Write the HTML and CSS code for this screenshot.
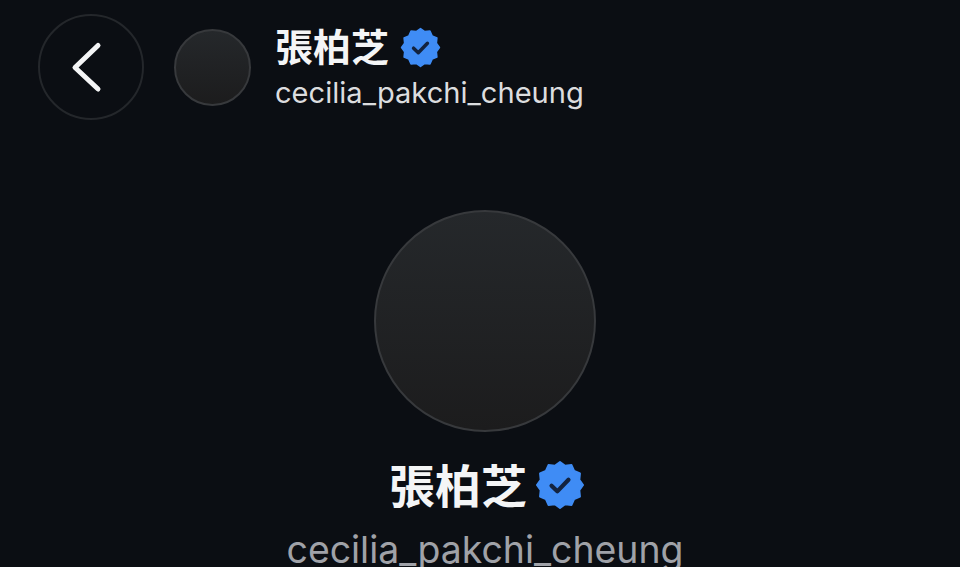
FILE: index.html
```html
<!DOCTYPE html>
<html lang="zh-Hant">
<head>
    <meta charset="UTF-8">
    <meta name="viewport" content="width=device-width, initial-scale=1.0">
    <title>張柏芝</title>
    <link rel="stylesheet" href="styles.css">
</head>
<body>
    <svg class="defs" width="0" height="0">
        <symbol id="badge" viewBox="-1 -1 26 26">
            <polygon class="badge-fill" points="12,0 14.69,1.95 18,1.61 19.35,4.65 22.39,6 22.05,9.31 24,12 22.05,14.69 22.39,18 19.35,19.35 18,22.39 14.69,22.05 12,24 9.31,22.05 6,22.39 4.65,19.35 1.61,18 1.95,14.69 0,12 1.95,9.31 1.61,6 4.65,4.65 6,1.61 9.31,1.95"/>
            <path class="badge-check" d="M7.6 12.4l3 2.9 5.8-6"/>
        </symbol>
    </svg>

    <header class="topbar">
        <button class="back-btn" type="button" aria-label="Back">
            <svg class="back-icon" viewBox="0 0 32 54"><path d="M28 5.5L5 27.5 28 49"/></svg>
        </button>
        <div class="avatar avatar-small"></div>
        <div class="topbar-text">
            <div class="name-row">
                <span class="name-small">張柏芝</span>
                <svg class="badge-small"><use href="#badge"/></svg>
            </div>
            <div class="handle-small">cecilia_pakchi_cheung</div>
        </div>
    </header>

    <main class="profile">
        <div class="avatar avatar-large"></div>
        <div class="name-row name-row-large">
            <span class="name-large">張柏芝</span>
            <svg class="badge-large"><use href="#badge"/></svg>
        </div>
        <div class="handle-large">cecilia_pakchi_cheung</div>
    </main>
</body>
</html>
```

FILE: styles.css
```css
html, body {
    height: 100%;
}

body {
    margin: 0;
    overflow: hidden;
    background-color: #0b0e13;
    color: #f4f5f6;
    font-family: Inter, "Noto Sans CJK TC", sans-serif;
}

.defs {
    display: block;
    height: 0;
}

.badge-fill {
    fill: #3f8cf5;
    stroke: #3f8cf5;
    stroke-width: 1;
    stroke-linejoin: round;
}

.badge-check {
    fill: none;
    stroke: #13233f;
    stroke-width: 2.2;
    stroke-linecap: round;
    stroke-linejoin: round;
}

.topbar {
    display: flex;
    align-items: center;
    height: 106px;
    padding: 14px 0 0 38px;
}

.back-btn {
    display: flex;
    align-items: center;
    justify-content: center;
    box-sizing: border-box;
    flex: none;
    width: 106px;
    height: 106px;
    padding: 0 10px 0 0;
    border: 2px solid #24272b;
    border-radius: 50%;
    background: none;
}

.back-icon {
    width: 32px;
    height: 54px;
}

.back-icon path {
    fill: none;
    stroke: #f4f5f6;
    stroke-width: 5;
    stroke-linecap: round;
    stroke-linejoin: round;
}

.avatar {
    box-sizing: border-box;
    flex: none;
    border: 2px solid #37393c;
    border-radius: 50%;
    background: linear-gradient(#25282b, #1c1c1d);
}

.avatar-small {
    width: 77px;
    height: 77px;
    margin: 0 0 0 30px;
}

.topbar-text {
    align-self: flex-start;
    margin: 5px 0 0 26px;
}

.name-row {
    display: flex;
    align-items: center;
}

.name-small {
    font-family: "Noto Sans CJK TC", sans-serif;
    font-size: 38px;
    font-weight: 700;
    line-height: 52px;
    margin-left: -2px;
}

.badge-small {
    width: 41px;
    height: 41px;
    margin: 4px 0 0 11px;
}

.handle-small {
    margin: 7px 0 0 -2px;
    color: #dcdddf;
    font-size: 29.1px;
    line-height: 30px;
    white-space: nowrap;
}

.profile {
    display: flex;
    flex-direction: column;
    align-items: center;
    padding: 90px 0 0 10px;
}

.avatar-large {
    width: 222px;
    height: 222px;
}

.name-row-large {
    margin: 19px 0 0 4px;
}

.name-large {
    font-family: "Noto Sans CJK TC", sans-serif;
    font-size: 46px;
    font-weight: 700;
    line-height: 64px;
}

.badge-large {
    width: 50px;
    height: 50px;
    margin: 4px 0 0 8px;
}

.handle-large {
    margin-top: 14px;
    color: #a0a2a8;
    font-size: 37.4px;
    line-height: 42px;
    white-space: nowrap;
}
```
